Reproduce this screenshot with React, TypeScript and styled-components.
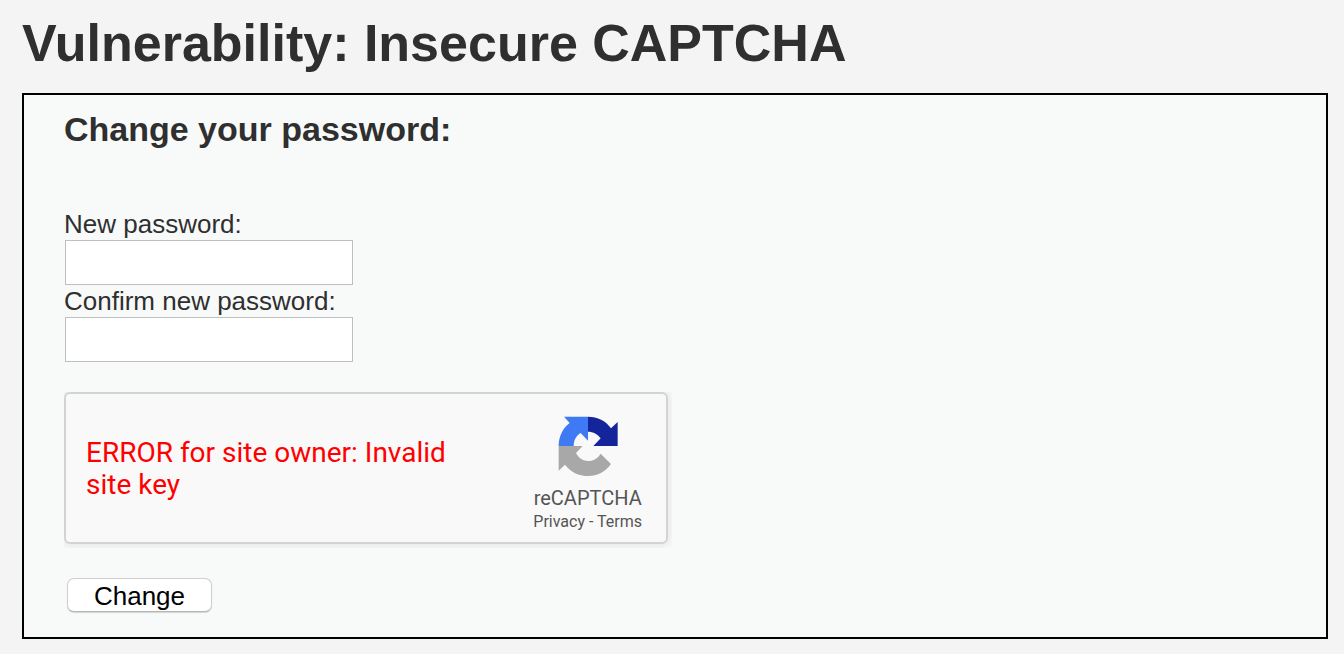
import React from "react";
import styled, { createGlobalStyle } from "styled-components";

const GlobalStyle = createGlobalStyle`
  *, *::before, *::after { box-sizing: border-box; }
  body {
    margin: 0;
    background: #f4f4f4;
    color: #2f2f2f;
    font: 26px/30px "Liberation Sans", Arial, sans-serif;
  }
`;

const Page = styled.main`
  padding: 13px 16px 15px 22px;
`;

const Title = styled.h1`
  margin: 0 0 20px;
  font-size: 52px;
  line-height: 60px;
`;

const Panel = styled.section`
  padding: 14px 40px 25px;
  border: 2px solid #000;
  background: #f8fafa;
`;

const PanelTitle = styled.h2`
  margin: 0 0 60px;
  font-size: 34px;
  line-height: 40px;
`;

const Form = styled.form`
  display: flex;
  flex-direction: column;
  align-items: flex-start;
`;

const Label = styled.label`
  display: block;
`;

const PasswordInput = styled.input`
  width: 288px;
  height: 45px;
  margin: 1px 1px;
  padding: 4px 8px;
  border: 1px solid #bfbfbf;
  border-radius: 0;
  background: #fff;
  font: inherit;
`;

const CaptchaFrame = styled.div`
  width: 608px;
  max-width: 100%;
  margin: 29px 0 30px;
  padding: 0 4px 4px 0;
  overflow: hidden;
`;

const Captcha = styled.div`
  display: flex;
  align-items: center;
  justify-content: space-between;
  height: 152px;
  padding: 2px 24px 0 20px;
  border: 2px solid #d3d3d3;
  border-radius: 6px;
  background: #f9f9f9;
  box-shadow: 0 0 8px 2px rgba(0, 0, 0, 0.08);
  font-family: Roboto, sans-serif;
`;

const CaptchaError = styled.p`
  max-width: 400px;
  margin: 0;
  color: #f00;
  font-size: 28px;
  line-height: 32px;
`;

const Brand = styled.div`
  display: flex;
  flex-direction: column;
  align-items: center;
  padding-top: 12px;
  color: #555;
`;

const BrandName = styled.div`
  margin-top: 10px;
  font-size: 20px;
  line-height: 24px;
`;

const BrandLinks = styled.div`
  font-size: 16px;
  line-height: 24px;
  white-space: nowrap;
`;

const BrandLink = styled.a`
  color: inherit;
  text-decoration: none;
`;

const SubmitButton = styled.button`
  width: 145px;
  height: 34px;
  margin-left: 3px;
  padding: 2px 0 0;
  border: 1px solid #cfcfcf;
  border-bottom-color: #b5b5b5;
  border-radius: 7px;
  background: #fff;
  box-shadow: 0 1px 1px rgba(0, 0, 0, 0.15);
  color: #000;
  font: inherit;
`;

function RecaptchaLogo() {
  return (
    <svg width="60" height="60" viewBox="54 48 180 180" aria-hidden="true">
      <path
        fill="#3f7af4"
        d="M56 138C56 108 69 84 89 69L72 50H144V122L122 99C109 107 101 121 101 138Z"
      />
      <path
        fill="#14249b"
        d="M144 50C173 50 197 62 213 85L233 66V138H160L182 115C173 102 160 95 144 95Z"
      />
      <path
        fill="#a8a8a8"
        d="M56 138H128L108 159C116 175 129 183 145 183C161 183 174 174 182 161L213 192C196 216 172 228 145 228C116 228 91 216 75 194L56 212Z"
      />
    </svg>
  );
}

export default function App() {
  return (
    <>
      <GlobalStyle />
      <Page>
        <Title>Vulnerability: Insecure CAPTCHA</Title>
        <Panel>
          <PanelTitle>Change your password:</PanelTitle>
          <Form onSubmit={(event: React.FormEvent) => event.preventDefault()}>
            <Label htmlFor="password-new">New password:</Label>
            <PasswordInput id="password-new" type="password" autoComplete="off" />
            <Label htmlFor="password-confirm">Confirm new password:</Label>
            <PasswordInput id="password-confirm" type="password" autoComplete="off" />
            <CaptchaFrame>
              <Captcha>
                <CaptchaError>ERROR for site owner: Invalid site key</CaptchaError>
                <Brand>
                  <RecaptchaLogo />
                  <BrandName>reCAPTCHA</BrandName>
                  <BrandLinks>
                    <BrandLink href="#privacy">Privacy</BrandLink> -{" "}
                    <BrandLink href="#terms">Terms</BrandLink>
                  </BrandLinks>
                </Brand>
              </Captcha>
            </CaptchaFrame>
            <SubmitButton type="submit">Change</SubmitButton>
          </Form>
        </Panel>
      </Page>
    </>
  );
}
